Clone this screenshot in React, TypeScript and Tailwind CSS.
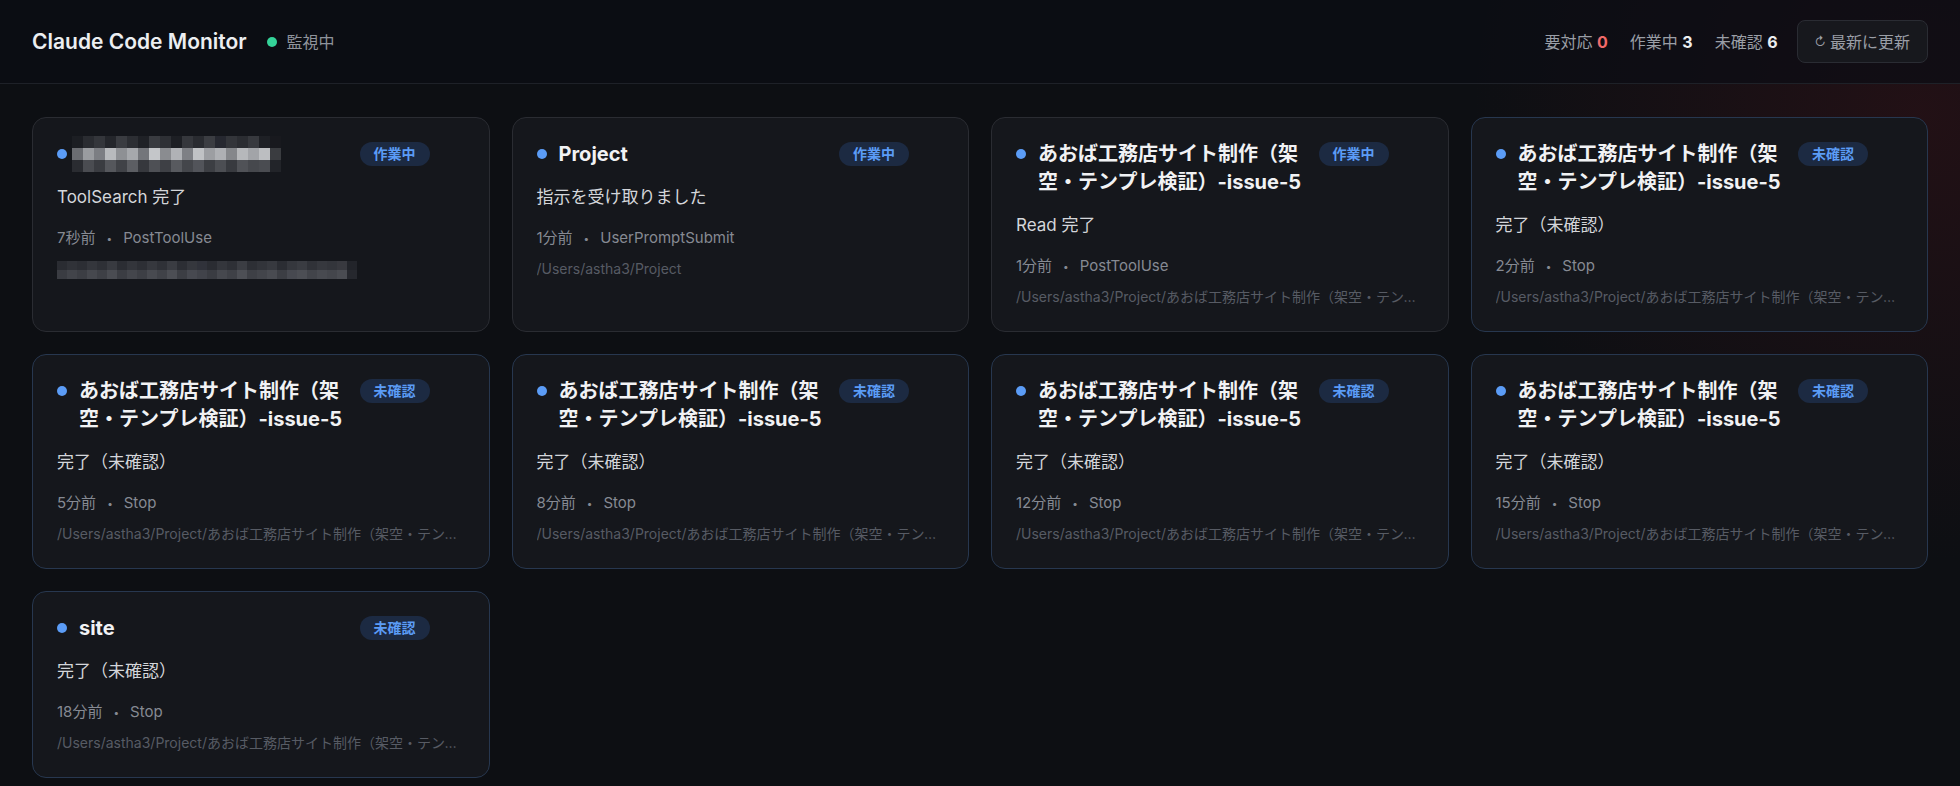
import React from "react";

type Status = "working" | "unread";

interface Session {
  title: string;
  message: string;
  ago: string;
  event: string;
  path: string;
  status: Status;
  masked?: boolean;
}

const LONG = "あおば工務店サイト制作（架空・テンプレ検証）-issue-5";
const LONG_PATH = "/Users/astha3/Project/あおば工務店サイト制作（架空・テンプレ検証）-issue-5";

const sessions: Session[] = [
  { title: "", message: "ToolSearch 完了", ago: "7秒前", event: "PostToolUse", path: "", status: "working", masked: true },
  { title: "Project", message: "指示を受け取りました", ago: "1分前", event: "UserPromptSubmit", path: "/Users/astha3/Project", status: "working" },
  { title: LONG, message: "Read 完了", ago: "1分前", event: "PostToolUse", path: LONG_PATH, status: "working" },
  { title: LONG, message: "完了（未確認）", ago: "2分前", event: "Stop", path: LONG_PATH, status: "unread" },
  { title: LONG, message: "完了（未確認）", ago: "5分前", event: "Stop", path: LONG_PATH, status: "unread" },
  { title: LONG, message: "完了（未確認）", ago: "8分前", event: "Stop", path: LONG_PATH, status: "unread" },
  { title: LONG, message: "完了（未確認）", ago: "12分前", event: "Stop", path: LONG_PATH, status: "unread" },
  { title: LONG, message: "完了（未確認）", ago: "15分前", event: "Stop", path: LONG_PATH, status: "unread" },
  { title: "site", message: "完了（未確認）", ago: "18分前", event: "Stop", path: LONG_PATH, status: "unread" },
];

// pixelated blocks standing in for redacted text
const titleShades = [
  ["bg-[#1c1e23]", "bg-[#2a2c31]", "bg-[#34363b]", "bg-[#24262b]", "bg-[#3a3c41]", "bg-[#2c2e33]", "bg-[#1f2126]", "bg-[#393b40]", "bg-[#2e3035]", "bg-[#1d1f24]", "bg-[#35373c]", "bg-[#292b30]", "bg-[#3b3d42]", "bg-[#262830]", "bg-[#33353a]", "bg-[#2b2d32]", "bg-[#37393e]", "bg-[#1e2025]", "bg-[#18191e]"],
  ["bg-[#6b6d72]", "bg-[#9a9ca0]", "bg-[#7c7e83]", "bg-[#b8babd]", "bg-[#8e9094]", "bg-[#a6a8ac]", "bg-[#74767b]", "bg-[#c4c6c9]", "bg-[#8a8c90]", "bg-[#b0b2b6]", "bg-[#7e8085]", "bg-[#c0c2c5]", "bg-[#9c9ea2]", "bg-[#aeb0b4]", "bg-[#85878b]", "bg-[#b6b8bb]", "bg-[#a2a4a8]", "bg-[#bcbec1]", "bg-[#3a3c40]"],
  ["bg-[#2a2c31]", "bg-[#4a4c51]", "bg-[#3a3c41]", "bg-[#55575c]", "bg-[#404247]", "bg-[#5c5e63]", "bg-[#36383d]", "bg-[#4e5055]", "bg-[#3e4045]", "bg-[#585a5f]", "bg-[#44464b]", "bg-[#52545a]", "bg-[#3c3e43]", "bg-[#4c4e53]", "bg-[#383a3f]", "bg-[#505257]", "bg-[#46484d]", "bg-[#4a4c51]", "bg-[#222429]"],
];

const pathShades = [
  ["bg-[#2a2c32]", "bg-[#303238]", "bg-[#2c2e34]", "bg-[#34363c]", "bg-[#2e3036]", "bg-[#383a40]", "bg-[#2b2d33]", "bg-[#33353b]", "bg-[#2d2f35]", "bg-[#36383e]", "bg-[#2f3137]", "bg-[#3a3c42]", "bg-[#2c2e34]", "bg-[#35373d]", "bg-[#30323a]", "bg-[#2a2c32]", "bg-[#34363c]", "bg-[#2e3036]", "bg-[#3b3d43]", "bg-[#2d2f35]", "bg-[#32343a]", "bg-[#37393f]", "bg-[#2b2d33]", "bg-[#35373d]", "bg-[#3a3c42]", "bg-[#303238]", "bg-[#36383e]", "bg-[#33353b]", "bg-[#38393f]", "bg-[#22242a]"],
  ["bg-[#3a3c42]", "bg-[#42444a]", "bg-[#3c3e44]", "bg-[#46484e]", "bg-[#3e4046]", "bg-[#4a4c52]", "bg-[#3b3d43]", "bg-[#44464c]", "bg-[#3d3f45]", "bg-[#484a50]", "bg-[#404248]", "bg-[#4c4e54]", "bg-[#3c3e44]", "bg-[#474950]", "bg-[#41434a]", "bg-[#3a3c42]", "bg-[#46484e]", "bg-[#3f4147]", "bg-[#4d4f55]", "bg-[#3e4046]", "bg-[#43454b]", "bg-[#494b51]", "bg-[#3c3e44]", "bg-[#474950]", "bg-[#4c4e54]", "bg-[#42444a]", "bg-[#484a50]", "bg-[#44464c]", "bg-[#4a4c52]", "bg-[#26282e]"],
];

function Mosaic({ rows, size }: { rows: string[][]; size: "title" | "path" }) {
  return (
    <div className="flex flex-col">
      {rows.map((row, r) => (
        <div key={r} className="flex">
          {row.map((c, i) => (
            <div key={i} className={size === "title" ? `h-[12px] w-[11px] ${c}` : `h-[9px] w-[10px] ${c}`} />
          ))}
        </div>
      ))}
    </div>
  );
}

function Card({ s }: { s: Session }) {
  const unread = s.status === "unread";
  return (
    <div
      className={
        unread
          ? "rounded-[14px] border border-[#27374f] bg-[#15171c] px-6 pt-[22px] pb-[24px]"
          : "rounded-[14px] border border-[#2a2c32] bg-[#15171c] px-6 pt-[22px] pb-[24px]"
      }
    >
      <div className="flex items-start">
        <span className="mt-[9px] h-[10px] w-[10px] shrink-0 rounded-full bg-[#5b9cf6]" />
        {s.masked ? (
          <div className="ml-[5px] -mt-[4px] -mb-[4px] flex-1">
            <Mosaic rows={titleShades} size="title" />
          </div>
        ) : (
          <div className="ml-3 flex-1 text-[20px] font-bold leading-7 text-[#f1f2f4]">{s.title}</div>
        )}
        <span className="ml-3 mt-0.5 shrink-0 rounded-full bg-[#1c2a42] px-3.5 text-[14px] font-bold leading-6 text-[#5b9cf6]">
          {unread ? "未確認" : "作業中"}
        </span>
        <span className="w-[35px] shrink-0" />
      </div>
      <div className="mt-4 text-[17px] leading-[26px] text-[#d4d6da]">{s.message}</div>
      <div className="mt-[17px] flex items-center text-[15px] leading-[22px] text-[#868a93]">
        <span>{s.ago}</span>
        <span className="mx-[11px] text-[10px]">•</span>
        <span>{s.event}</span>
      </div>
      {s.masked ? (
        <div className="mt-[10px] h-5 pt-0.5">
          <Mosaic rows={pathShades} size="path" />
        </div>
      ) : (
        <div className="mt-[10px] truncate text-[14px] leading-5 text-[#575b64]">{s.path}</div>
      )}
    </div>
  );
}

export default function App() {
  return (
    <div
      className="min-h-[786px] bg-[#0d0f13] bg-[radial-gradient(circle_at_98%_14%,rgba(110,22,30,0.22),transparent_22%)] font-['Inter','Noto_Sans_CJK_JP',sans-serif]"
    >
      <header className="flex h-[84px] items-center justify-between border-b border-[#1e2128] bg-[#0b0d14]/70 px-8">
        <div className="flex items-center">
          <h1 className="text-[21px] font-semibold text-[#eceef1]">Claude Code Monitor</h1>
          <span className="ml-5 h-[10px] w-[10px] rounded-full bg-[#34d399]" />
          <span className="ml-2.5 text-[16px] text-[#8f939b]">監視中</span>
        </div>
        <div className="flex items-center text-[16px]">
          <span className="text-[#9a9ea6]">
            要対応 <span className="font-bold text-[#f06a6a]">0</span>
          </span>
          <span className="ml-[22px] text-[#9a9ea6]">
            作業中 <span className="font-bold text-[#eceef1]">3</span>
          </span>
          <span className="ml-[22px] text-[#9a9ea6]">
            未確認 <span className="font-bold text-[#eceef1]">6</span>
          </span>
          <button className="ml-[19px] flex h-[43px] items-center rounded-lg border border-[#2a2c33] bg-[#17181d] px-[17px] text-[16px] text-[#9a9ea6]">
            <span className="mr-1 text-[12px]">↻</span>最新に更新
          </button>
        </div>
      </header>
      <main className="grid grid-cols-4 gap-[22px] px-8 pt-[33px] pb-8">
        {sessions.map((s, i) => (
          <Card key={i} s={s} />
        ))}
      </main>
    </div>
  );
}
